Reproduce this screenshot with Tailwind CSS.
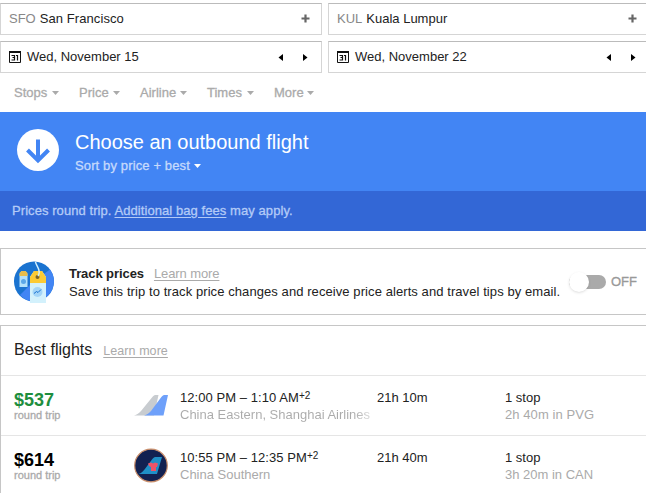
<!DOCTYPE html>
<html lang="en">
<head>
  <meta charset="UTF-8" />
  <meta name="viewport" content="width=device-width, initial-scale=1.0" />
  <title>Flights</title>
  <script src="https://cdn.jsdelivr.net/npm/@tailwindcss/browser@4"></script>
  <style>
    body {
      font-family: "Liberation Sans", Arial, sans-serif;
    }

    .semi {
      -webkit-text-stroke: 0.3px currentColor;
    }
  </style>
</head>
<body class="bg-white text-[13px] leading-4 text-[#222] w-[646px] h-[493px] overflow-hidden">

  <!-- Search boxes -->
  <div class="grid grid-cols-[322px_322px] gap-x-1.5 gap-y-1.5 pt-[3px]">
    <div class="h-8 border border-[#d5d5d5] border-t-[#bbb] flex items-center px-2">
      <span class="text-[#888] mr-1">SFO</span>
      <span class="tracking-[0.08px]">San Francisco</span>
      <svg class="ml-auto mr-[3px] -mt-0.5" width="9" height="9" viewBox="0 0 9 9"><path d="M4.5 0.5v8M0.5 4.5h8" stroke="#666" stroke-width="2.2" /></svg>
    </div>
    <div class="h-8 border border-[#d5d5d5] border-t-[#bbb] flex items-center px-2">
      <span class="text-[#888] mr-1">KUL</span>
      <span>Kuala Lumpur</span>
      <svg class="ml-auto mr-1 -mt-0.5" width="9" height="9" viewBox="0 0 9 9"><path d="M4.5 0.5v8M0.5 4.5h8" stroke="#666" stroke-width="2.2" /></svg>
    </div>
    <div class="h-8 border border-[#d5d5d5] border-t-[#bbb] flex items-center px-2">
      <svg class="mr-1.5" width="12" height="12" viewBox="0 0 12 12"><path d="M0.5 1v10.5h11V1" fill="none" stroke="#111" /><path d="M0 0h12v2H0z" fill="#111" /><path d="M2.500 4.500h3v4.500h-3M3.500 6.500h2M7 4.500h1.500V9.500" fill="none" stroke="#111" stroke-width="1.200" /></svg>
      <span>Wed, November 15</span>
      <svg class="ml-auto mr-5 mt-px" width="5" height="7" viewBox="0 0 5 7"><path d="M5 0v7L0.5 3.5z" /></svg>
      <svg class="mr-[5px] mt-px" width="5" height="7" viewBox="0 0 5 7"><path d="M0 0v7l4.5-3.5z" /></svg>
    </div>
    <div class="h-8 border border-[#d5d5d5] border-t-[#bbb] flex items-center px-2">
      <svg class="mr-1.5" width="12" height="12" viewBox="0 0 12 12"><path d="M0.5 1v10.5h11V1" fill="none" stroke="#111" /><path d="M0 0h12v2H0z" fill="#111" /><path d="M2.500 4.500h3v4.500h-3M3.500 6.500h2M7 4.500h1.500V9.500" fill="none" stroke="#111" stroke-width="1.200" /></svg>
      <span>Wed, November 22</span>
      <svg class="ml-auto mr-5 mt-px" width="5" height="7" viewBox="0 0 5 7"><path d="M5 0v7L0.5 3.5z" /></svg>
      <svg class="mr-[5px] mt-px" width="5" height="7" viewBox="0 0 5 7"><path d="M0 0v7l4.5-3.5z" /></svg>
    </div>
  </div>

  <!-- Filters -->
  <div class="semi h-[39px] flex items-center pl-3.5 text-[#aaa]">
    <div class="w-[65px] flex items-center gap-[5px]">Stops <svg width="7" height="4" viewBox="0 0 7 4"><path d="M0 0h7L3.5 4z" fill="#aaa" /></svg></div>
    <div class="w-[61px] flex items-center gap-1">Price <svg width="7" height="4" viewBox="0 0 7 4"><path d="M0 0h7L3.5 4z" fill="#aaa" /></svg></div>
    <div class="w-[67px] flex items-center gap-1">Airline <svg width="7" height="4" viewBox="0 0 7 4"><path d="M0 0h7L3.5 4z" fill="#aaa" /></svg></div>
    <div class="w-[67px] flex items-center gap-[5px]">Times <svg width="7" height="4" viewBox="0 0 7 4"><path d="M0 0h7L3.5 4z" fill="#aaa" /></svg></div>
    <div class="flex items-center gap-[3px]">More <svg width="7" height="4" viewBox="0 0 7 4"><path d="M0 0h7L3.5 4z" fill="#aaa" /></svg></div>
  </div>

  <!-- Outbound header -->
  <div class="h-[79px] bg-[#4285f4] flex pl-[17px]">
    <svg class="mt-[17px] mr-4" width="42" height="42" viewBox="0 0 42 42">
      <circle cx="21" cy="21" r="21" fill="#fff" />
      <path d="M21 10.5v20M10.500 21L21 31.500 31.500 21" fill="none" stroke="#4285f4" stroke-width="4" />
    </svg>
    <div class="pt-[18px]">
      <div class="text-xl leading-6 text-white">Choose an outbound flight</div>
      <div class="semi mt-1 flex items-center gap-1 text-[#c6dafc] tracking-[0.13px]">Sort by price + best <svg width="7" height="4" viewBox="0 0 7 4"><path d="M0 0h7L3.5 4z" fill="#fff" /></svg></div>
    </div>
  </div>
  <div class="semi h-10 bg-[#3367d6] flex items-center pl-3 text-[#b3cbf7] tracking-[0.07px]">
    <span>Prices round trip. <span class="underline underline-offset-2">Additional bag fees</span> may apply.</span>
  </div>

  <!-- Track prices -->
  <div class="mt-[17px] h-[67px] border border-r-0 border-[#c6c6c6] flex items-center pl-[13px]">
    <svg class="mr-[14px]" width="41" height="42" viewBox="0 0 41 42">
      <circle cx="20" cy="20.500" r="20" fill="#1a73d0" />
      <path d="M20 20L36 8.500A20 20 0 0 1 31 37L16 40A20 20 0 0 1 6 34z" fill="#4285f4" />
      <path d="M5.500 13l2-3h4l2 3v13h-8z" fill="#b3e1fb" />
      <path d="M5.500 15v-3l2-2h4l2 2v3z" fill="#e8bd4b" />
      <circle cx="9.500" cy="20.500" r="2.500" fill="#5ba7e8" />
      <path d="M16 16l4-6h8l4 6v26H16z" fill="#d3f1fc" />
      <path d="M16 22v-6l4-6h8l4 6v6z" fill="#fccb35" />
      <circle cx="23.500" cy="16" r="2" fill="#7a652b" />
      <circle cx="23.500" cy="31" r="5" fill="#a3d5f8" />
      <path d="M20 32.500l2.500-2 1.500 1 3-3" fill="none" stroke="#1a73d0" />
      <path d="M24 15C28 9 22 5 21.500 1" fill="none" stroke="#d3f1fc" stroke-width="1.500" />
    </svg>
    <div class="w-[500px] pt-0.5 leading-[18px] whitespace-nowrap">
      <div class="flex gap-2.5"><b class="tracking-[-0.08px]">Track prices</b><span class="text-[#aaa] underline underline-offset-2 tracking-[-0.1px]">Learn more</span></div>
      <div class="tracking-[0.08px]">Save this trip to track price changes and receive price alerts and travel tips by email.</div>
    </div>
    <div class="w-[37px] h-3.5 rounded-full bg-[#aaa] flex items-center mr-[5px]">
      <div class="w-5 h-5 shrink-0 rounded-full bg-white shadow"></div>
    </div>
    <span class="semi text-[#999]">OFF</span>
  </div>

  <!-- Best flights -->
  <div class="mt-2.5 border border-r-0 border-[#c6c6c6] h-[180px]">
    <div class="h-[49px] flex items-baseline pt-3.5 pl-[13px]">
      <span class="text-base leading-5 mr-[11px]">Best flights</span>
      <span class="text-[12.5px] text-[#aaa] underline underline-offset-2 tracking-[0.07px]">Learn more</span>
    </div>
    <div class="h-[60px] border-t border-[#e5e5e5] flex pl-[13px] pt-[13px] leading-[17px]">
      <div class="w-[120px]">
        <div class="h-5 text-lg leading-[22px] font-bold text-[#1e8e3e]">$537</div>
        <div class="semi text-[11px] leading-3 text-[#aaa]">round trip</div>
      </div>
      <svg class="mt-[6px] mr-3" width="34" height="21" viewBox="0 0 34 21">
        <path d="M0 20.500c3-1 5-2 7-4.500L18 2.500C19.500 0.500 20.500 0 22 0h2.500L20 20.500z" fill="#c8ccd0" />
        <path d="M10 20.500c3-1 5-2 7-4.500L27 2.500C28.500 0.500 29.500 0 31 0h3l-4.500 20.500z" fill="#6ea0fa" />
      </svg>
      <div class="w-[197px] whitespace-nowrap">
        <div class="h-[17px] tracking-[0.06px]">12:00 PM – 1:10 AM<span class="relative -top-[3px] text-[10px]">+2</span></div>
        <div class="w-[192px] overflow-hidden text-transparent bg-clip-text bg-linear-to-r from-[#aaa] from-90% to-[#ddd]">China Eastern, Shanghai Airlines</div>
      </div>
      <div class="w-32">21h 10m</div>
      <div>
        <div>1 stop</div>
        <div class="text-[#aaa] tracking-[0.07px]">2h 40m in PVG</div>
      </div>
    </div>
    <div class="h-[60px] border-t border-[#e5e5e5] flex pl-[13px] pt-[13px] leading-[17px]">
      <div class="w-[120px]">
        <div class="h-5 text-lg leading-[22px] font-bold text-black">$614</div>
        <div class="semi text-[11px] leading-3 text-[#aaa]">round trip</div>
      </div>
      <svg class="-mt-px mr-3" width="34" height="35" viewBox="0 0 34 35">
        <circle cx="17" cy="17.500" r="16.300" fill="#122151" stroke="#c88e6b" stroke-width="1.200" />
        <path d="M4.500 26c3-1 4-2 6-4.500L18 11.500C19.500 9.500 20.500 9 22 9h6L23 26z" fill="#208fc6" />
        <path d="M14 15.500l3-1 2 1 2-1 3 1-1 3.500-1 0v4h-5v-4l-2-1z" fill="#ee5467" />
      </svg>
      <div class="w-[197px] whitespace-nowrap">
        <div class="h-[17px] tracking-[0.06px]">10:55 PM – 12:35 PM<span class="relative -top-[3px] text-[10px]">+2</span></div>
        <div class="text-[#aaa]">China Southern</div>
      </div>
      <div class="w-32">21h 40m</div>
      <div>
        <div>1 stop</div>
        <div class="text-[#aaa]">3h 20m in CAN</div>
      </div>
    </div>
  </div>
</body>
</html>
